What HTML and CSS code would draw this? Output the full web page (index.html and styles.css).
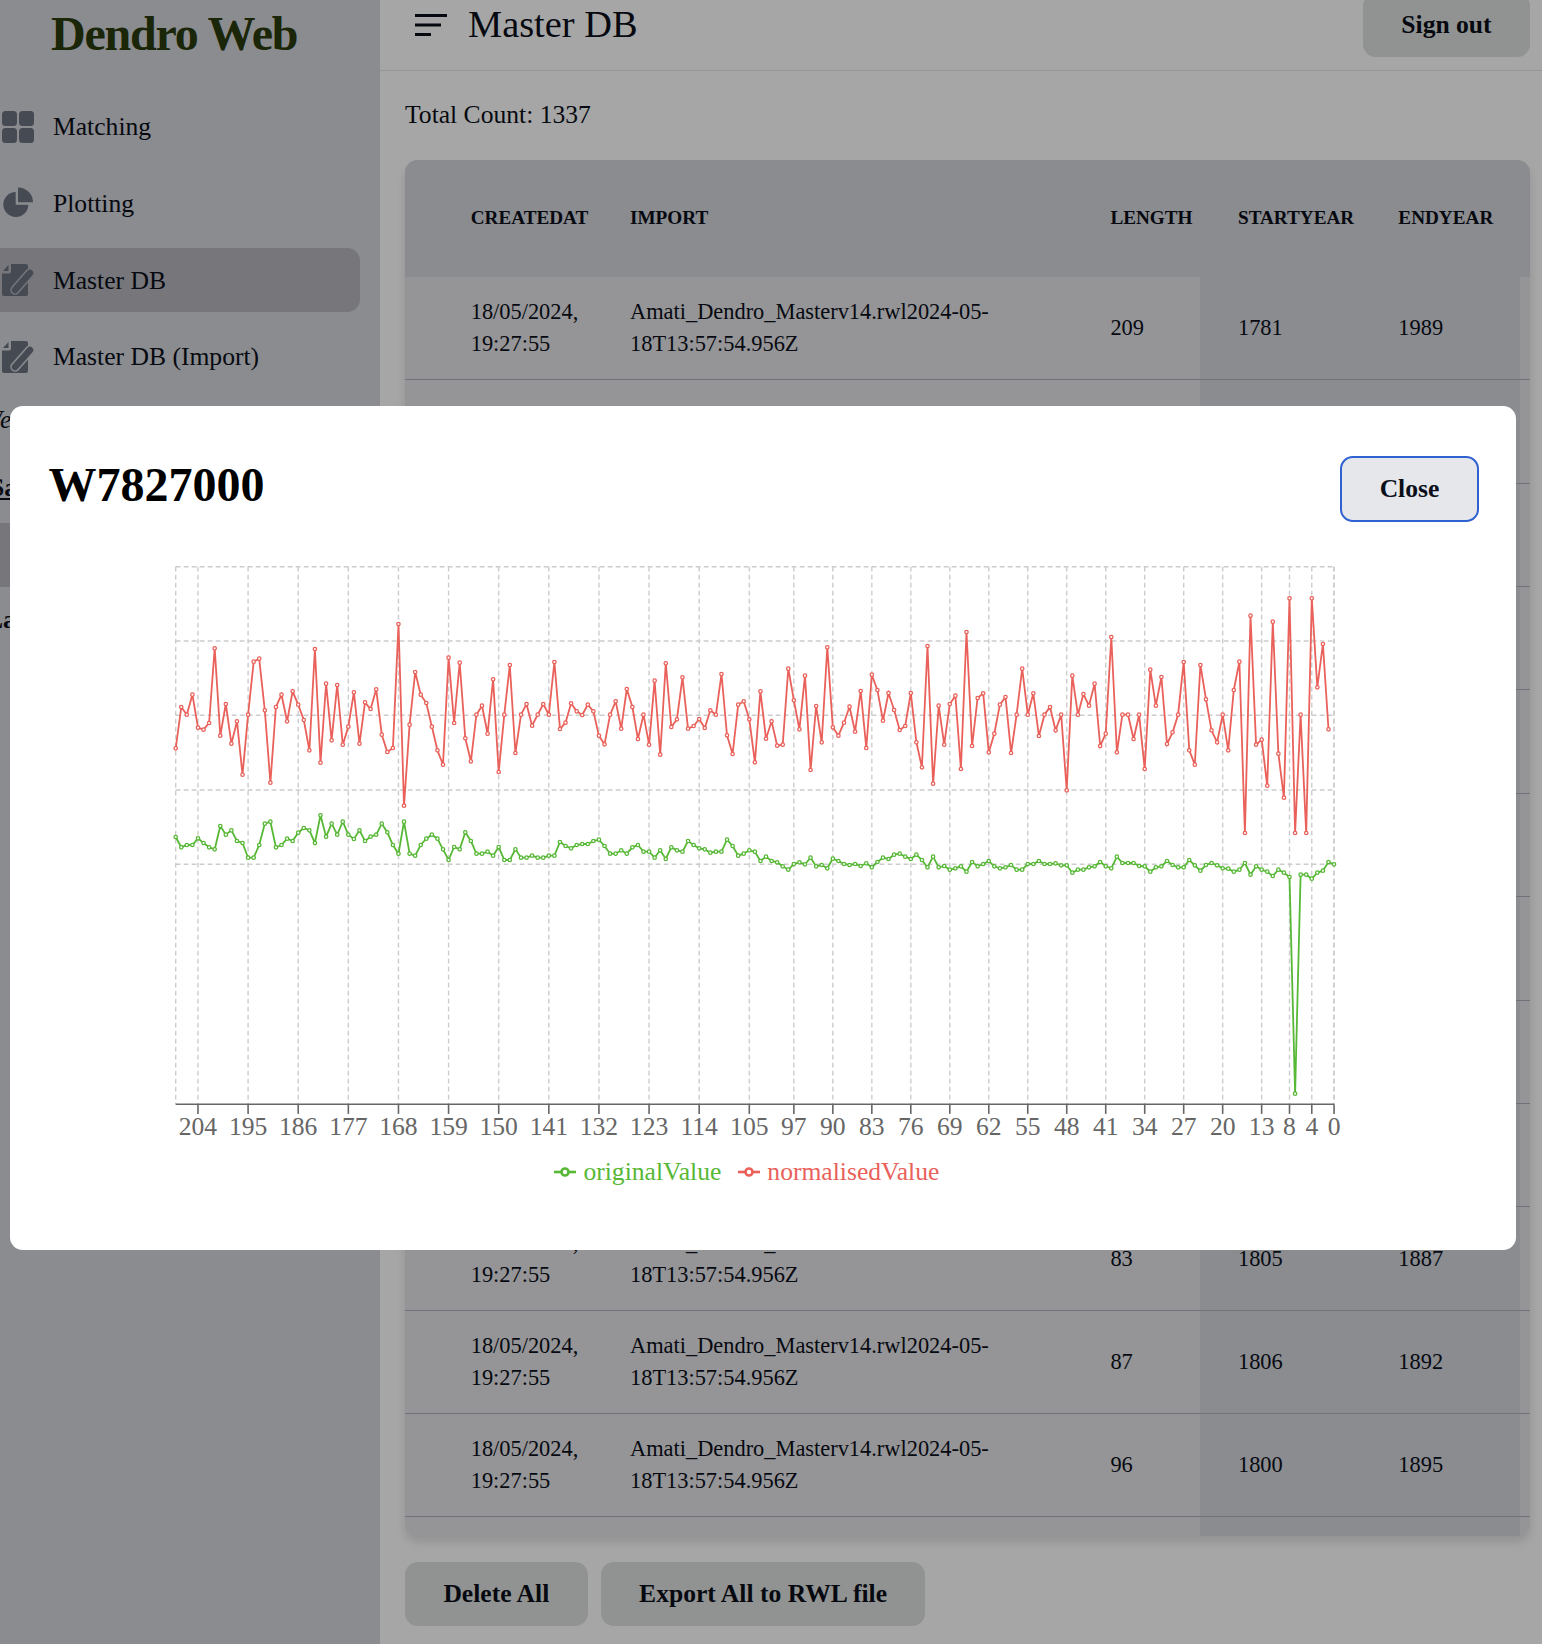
FILE: index.html
```html
<!DOCTYPE html>
<html lang="en">
<head>
    <meta charset="UTF-8">
    <title>Dendro Web</title>
    <link rel="stylesheet" href="styles.css">
</head>
<body>

    <div class="layout">
        <aside class="sidebar">
            <div class="logo">Dendro Web</div>

            <nav class="side-nav">
                <a class="nav-item">
                    <svg class="nav-icon" viewBox="0 0 32 32"><rect x="0" y="0" width="15" height="15" rx="3.5"/><rect x="17" y="0" width="15" height="15" rx="3.5"/><rect x="0" y="17" width="15" height="15" rx="3.5"/><rect x="17" y="17" width="15" height="15" rx="3.5"/></svg>
                    Matching
                </a>
                <a class="nav-item">
                    <svg class="nav-icon" viewBox="0 0 32 32"><path d="M16 0.5A15 15 0 0 1 31 15.3H16Z"/><path d="M13.7 5A12.5 12.5 0 1 0 26.3 17.7H13.7Z"/></svg>
                    Plotting
                </a>
                <a class="nav-item active">
                    <svg class="nav-icon" viewBox="0 0 32 32"><path d="M6.5 1L1 7H6.5Z"/><path d="M9 0H24A2 2 0 0 1 26 2V30A2 2 0 0 1 24 32H2A2 2 0 0 1 0 30V9.500H7A2 2 0 0 0 9 7.500Z"/><path class="pen-gap" d="M13 26L28 9"/><path class="pen-body" d="M13 26L28 9"/></svg>
                    Master DB
                </a>
                <a class="nav-item">
                    <svg class="nav-icon" viewBox="0 0 32 32"><path d="M6.5 1L1 7H6.5Z"/><path d="M9 0H24A2 2 0 0 1 26 2V30A2 2 0 0 1 24 32H2A2 2 0 0 1 0 30V9.500H7A2 2 0 0 0 9 7.500Z"/><path class="pen-gap" d="M13 26L28 9"/><path class="pen-body" d="M13 26L28 9"/></svg>
                    Master DB (Import)
                </a>
            </nav>

            <div class="side-note">Welcome</div>
            <div class="side-link">Sample</div>
            <div class="side-band"></div>
            <div class="side-last">Last</div>
        </aside>

        <main class="main">
            <header class="topbar">
                <svg class="menu-icon" viewBox="0 0 32 22"><path d="M0 1.500H32M0 11H26M0 20.500H16"/></svg>
                <h2 class="page-title">Master DB</h2>
                <button class="btn btn-signout">Sign out</button>
            </header>

            <div class="content">
                <p class="total-count">Total Count: 1337</p>

                <div class="table-box">
                    <table class="master-table">
                        <colgroup>
                            <col class="col-gap"><col class="col-created"><col class="col-import"><col class="col-length"><col class="col-start"><col class="col-end"><col class="col-tail">
                        </colgroup>
                        <thead>
                            <tr><th></th><th>createdAt</th><th>import</th><th>length</th><th>startYear</th><th>endYear</th><th></th></tr>
                        </thead>
                        <tbody>
                            <tr><td></td><td>18/05/2024, 19:27:55</td><td>Amati_Dendro_Masterv14.rwl2024-05-18T13:57:54.956Z</td><td>209</td><td class="shade">1781</td><td class="shade">1989</td><td></td></tr>
                            <tr><td></td><td>18/05/2024, 19:27:55</td><td>Amati_Dendro_Masterv14.rwl2024-05-18T13:57:54.956Z</td><td>152</td><td class="shade">1820</td><td class="shade">1971</td><td></td></tr>
                            <tr><td></td><td>18/05/2024, 19:27:55</td><td>Amati_Dendro_Masterv14.rwl2024-05-18T13:57:54.956Z</td><td>118</td><td class="shade">1790</td><td class="shade">1907</td><td></td></tr>
                            <tr><td></td><td>18/05/2024, 19:27:55</td><td>Amati_Dendro_Masterv14.rwl2024-05-18T13:57:54.956Z</td><td>101</td><td class="shade">1802</td><td class="shade">1902</td><td></td></tr>
                            <tr><td></td><td>18/05/2024, 19:27:55</td><td>Amati_Dendro_Masterv14.rwl2024-05-18T13:57:54.956Z</td><td>94</td><td class="shade">1811</td><td class="shade">1904</td><td></td></tr>
                            <tr><td></td><td>18/05/2024, 19:27:55</td><td>Amati_Dendro_Masterv14.rwl2024-05-18T13:57:54.956Z</td><td>90</td><td class="shade">1808</td><td class="shade">1897</td><td></td></tr>
                            <tr><td></td><td>18/05/2024, 19:27:55</td><td>Amati_Dendro_Masterv14.rwl2024-05-18T13:57:54.956Z</td><td>88</td><td class="shade">1803</td><td class="shade">1890</td><td></td></tr>
                            <tr><td></td><td>18/05/2024, 19:27:55</td><td>Amati_Dendro_Masterv14.rwl2024-05-18T13:57:54.956Z</td><td>85</td><td class="shade">1807</td><td class="shade">1891</td><td></td></tr>
                            <tr><td></td><td>18/05/2024, 19:27:55</td><td>Amati_Dendro_Masterv14.rwl2024-05-18T13:57:54.956Z</td><td>92</td><td class="shade">1801</td><td class="shade">1892</td><td></td></tr>
                            <tr><td></td><td>18/05/2024, 19:27:55</td><td>Amati_Dendro_Masterv14.rwl2024-05-18T13:57:54.956Z</td><td>83</td><td class="shade">1805</td><td class="shade">1887</td><td></td></tr>
                            <tr><td></td><td>18/05/2024, 19:27:55</td><td>Amati_Dendro_Masterv14.rwl2024-05-18T13:57:54.956Z</td><td>87</td><td class="shade">1806</td><td class="shade">1892</td><td></td></tr>
                            <tr><td></td><td>18/05/2024, 19:27:55</td><td>Amati_Dendro_Masterv14.rwl2024-05-18T13:57:54.956Z</td><td>96</td><td class="shade">1800</td><td class="shade">1895</td><td></td></tr>
                            <tr><td></td><td>18/05/2024, 19:27:55</td><td>Amati_Dendro_Masterv14.rwl2024-05-18T13:57:54.956Z</td><td>99</td><td class="shade">1799</td><td class="shade">1897</td><td></td></tr>
                        </tbody>
                    </table>
                </div>

                <div class="table-actions">
                    <button class="btn">Delete All</button>
                    <button class="btn">Export All to RWL file</button>
                </div>
            </div>
        </main>
    </div>

    <!-- chart popup -->
    <div class="overlay">
        <div class="modal">
            <div class="modal-head">
                <h1 class="modal-title">W7827000</h1>
                <button class="btn-close">Close</button>
            </div>

            <svg id="chart" class="chart" width="1429" height="585"></svg>

            <div class="legend">
                <span class="legend-item legend-original">
                    <svg width="22" height="14" viewBox="0 0 22 14"><path d="M0 7H22"/><circle cx="11" cy="7" r="3.500"/></svg>
                    originalValue
                </span>
                <span class="legend-item legend-normalised">
                    <svg width="22" height="14" viewBox="0 0 22 14"><path d="M0 7H22"/><circle cx="11" cy="7" r="3.500"/></svg>
                    normalisedValue
                </span>
            </div>
        </div>
    </div>

    <script src="chart.js"></script>
</body>
</html>
```
FILE: styles.css
```css
* {
    box-sizing: border-box;
}

body {
    margin: 0;
    height: 1644px;
    overflow: hidden;
    background-color: #fff;
    color: #0b0f1a;
    font-family: "Liberation Serif", "Times New Roman", serif;
    font-size: 25.6px;
    line-height: 41px;
}

/* page is scrolled down a few pixels in the shot */
.layout {
    display: flex;
    height: 1651px;
    margin-top: -7px;
}

.sidebar {
    --side-bg: #d5d7dd;
    width: 380px;
    flex-shrink: 0;
    overflow: hidden;
    background-color: var(--side-bg);
}

.logo {
    margin: 15px 0 0 51px;
    height: 52px;
    font-size: 48px;
    line-height: 52px;
    font-weight: bold;
    letter-spacing: -1.2px;
    color: #2a3a0b;
}

.side-nav {
    display: flex;
    flex-direction: column;
    gap: 12.8px;
    margin-top: 34.600px;
}

.nav-item {
    display: flex;
    align-items: center;
    gap: 19px;
    width: 360px;
    height: 64px;
    padding-left: 2px;
    border-radius: 0 12.8px 12.8px 0;
}

.nav-item.active {
    --side-bg: #b5b6bd;
    background-color: var(--side-bg);
}

.nav-icon {
    width: 32px;
    height: 32px;
    flex-shrink: 0;
    fill: #6b7280;
}

.pen-gap {
    fill: none;
    stroke: var(--side-bg);
    stroke-width: 9.500;
    stroke-linecap: round;
}

.pen-body {
    fill: none;
    stroke: #6b7280;
    stroke-width: 6.500;
    stroke-linecap: round;
}

.side-note {
    margin: 15.400px 0 0 -19px;
    font-style: italic;
    line-height: 32px;
    white-space: nowrap;
}

.side-link {
    margin: 36px 0 0 -10px;
    font-weight: bold;
    line-height: 32px;
    text-decoration: underline;
}

.side-band {
    width: 360px;
    height: 64px;
    margin-top: 19px;
    background-color: #b5b6bd;
}

.side-last {
    margin: 17px 0 0 -14px;
    font-weight: bold;
    line-height: 32px;
}

.main {
    flex: 1;
    min-width: 0;
}

.topbar {
    display: flex;
    align-items: center;
    height: 78px;
    padding: 0 12px 13.8px 35px;
    border-bottom: 1px solid #e5e7eb;
}

.menu-icon {
    width: 32px;
    height: 22px;
    fill: none;
    stroke: #0b0f1a;
    stroke-width: 3;
}

.page-title {
    flex: 1;
    margin: -1px 0 0 21px;
    font-size: 38.4px;
    line-height: 50px;
    font-weight: normal;
}

.btn {
    height: 64px;
    padding: 0 38.4px;
    border: none;
    border-radius: 12.8px;
    background-color: #dfe2e1;
    color: #0b0f1a;
    font-family: inherit;
    font-size: 25.6px;
    font-weight: bold;
}

.content {
    padding: 22.6px 12px 0 25px;
}

.total-count {
    margin: 0 0 25.400px;
}

.table-box {
    height: 1376px;
    overflow: hidden;
    border-radius: 12.8px;
    background-color: #e5e5e8;
    box-shadow: 0 6px 10px rgba(0, 0, 0, 0.12);
}

.master-table {
    width: 100%;
    table-layout: fixed;
    border-collapse: collapse;
    font-size: 22.4px;
    line-height: 32px;
}

.col-gap { width: 27.300px; }
.col-created { width: 159.300px; }
.col-import { width: 480.400px; }
.col-length { width: 127.600px; }
.col-start { width: 160.400px; }
.col-end { width: 160px; }
.col-tail { width: 10px; }

.master-table th {
    height: 117px;
    padding: 0 0 0 38.4px;
    background-color: #d5d7dd;
    font-size: 19.2px;
    font-weight: bold;
    text-align: left;
    text-transform: uppercase;
    white-space: nowrap;
}

.master-table tbody tr {
    border-bottom: 1px solid #aeaebf;
}

.master-table td {
    padding: 19.2px 38.4px;
}

.master-table td:first-child,
.master-table td:last-child,
.master-table th:first-child,
.master-table th:last-child {
    padding: 0;
}

.master-table td.shade {
    background-color: #d5d7dd;
}

.table-actions {
    display: flex;
    gap: 13px;
    margin-top: 25.6px;
}

.overlay {
    position: fixed;
    top: 0;
    left: 0;
    right: 0;
    bottom: 0;
    padding: 406px 26px 0 10px;
    background-color: rgba(0, 0, 0, 0.35);
}

.modal {
    height: 844px;
    padding: 50px 37px 0 38.4px;
    border-radius: 12.8px;
    background-color: #fff;
    color: #000;
}

.modal-head {
    display: flex;
    justify-content: space-between;
    align-items: center;
    height: 66px;
    margin-bottom: 38px;
}

.modal-title {
    margin: 0 0 8px;
    font-size: 48px;
    line-height: 58px;
    font-weight: bold;
}

.btn-close {
    width: 139px;
    height: 66px;
    border: 2.500px solid #2f62d0;
    border-radius: 12.8px;
    background-color: #e5e7eb;
    color: #0b0f1a;
    font-family: inherit;
    font-size: 25.6px;
    font-weight: bold;
}

.chart {
    display: block;
}

.chart .grid {
    stroke: #ccc;
    stroke-width: 1.400;
    stroke-dasharray: 4.800 3.200;
    fill: none;
}

.chart .axis {
    stroke: #666;
    stroke-width: 1.600;
    fill: none;
}

.chart .tick-label {
    fill: #666;
    font-size: 25.6px;
    text-anchor: middle;
}

.chart .series {
    fill: none;
    stroke-width: 1.800;
}

.chart .dot {
    fill: #fff;
    stroke-width: 1.300;
}

.chart .original { stroke: #57b836; }
.chart .normalised { stroke: #e9615a; }

.legend {
    display: flex;
    justify-content: center;
    gap: 17px;
    width: 1397px;
    margin-top: 11px;
    line-height: 32px;
}

.legend-item {
    display: flex;
    align-items: center;
    gap: 7px;
}

.legend-item svg {
    fill: #fff;
    stroke: currentColor;
    stroke-width: 2.600;
}

.legend-original { color: #57b836; }
.legend-normalised { color: #e9615a; }
```
FILE: chart.js
```js
// values are read as y position * 3 from the top of the chart, one per year, left to right
var normalised = [565,441,464,404,503,509,489,265,527,432,551,484,644,464,305,296,451,668,441,404,484,394,434,480,571,267,608,371,541,375,554,500,397,551,427,447,388,524,576,564,192,737,494,336,404,429,500,571,614,293,489,308,535,604,464,437,521,358,636,464,315,
    579,464,432,497,464,432,464,306,507,488,430,454,465,434,454,527,553,464,424,506,387,441,537,464,554,362,584,310,501,478,352,506,498,477,504,451,464,342,526,582,434,424,478,607,394,536,484,557,554,326,421,508,347,630,438,547,262,502,527,488,440,515,393,
    564,344,390,482,399,450,510,498,399,547,622,258,671,437,554,432,407,627,216,558,414,400,577,521,434,411,579,464,326,464,400,528,464,441,511,464,691,347,464,402,437,371,558,521,231,577,464,464,537,464,627,329,437,351,552,517,464,306,571,614,315,418,511,
    547,464,571,390,305,819,167,554,539,677,185,581,713,115,819,464,819,115,382,252,508];

var original = [831,862,855,855,835,849,862,868,798,824,811,843,849,893,893,855,791,785,862,855,836,843,818,804,811,849,766,830,791,824,785,824,837,811,843,830,824,791,817,855,881,785,881,887,855,836,824,836,868,900,861,868,817,843,881,881,875,887,861,900,900,
    868,893,893,887,893,893,887,887,846,858,865,855,852,852,843,839,858,881,881,871,881,862,855,875,875,893,871,897,862,871,875,843,855,865,868,878,875,875,839,858,887,881,871,875,903,890,903,907,919,929,912,907,913,893,919,915,925,896,903,912,915,912,918,
    910,922,906,893,897,884,881,890,897,884,900,922,890,922,918,929,925,919,935,906,919,912,903,919,925,922,915,929,929,912,912,903,912,912,910,916,916,938,929,929,922,919,906,919,925,890,909,909,909,918,919,935,922,919,903,915,922,922,900,916,932,915,909,
    916,925,926,935,929,909,944,919,929,935,948,929,938,951,1601,944,944,956,938,932,906,913];

var ticks = [204,195,186,177,168,159,150,141,132,123,114,105,97,90,83,76,69,62,55,48,41,34,27,20,13,8,4,0];

var chart = document.getElementById('chart');
var plotLeft = 127.7, plotRight = 1286, plotTop = 6.7, plotBottom = 544.3, step = 5.569;

function add(tag, attrs, text) {
    var el = document.createElementNS('http://www.w3.org/2000/svg', tag);
    for (var key in attrs) {
        el.setAttribute(key, attrs[key]);
    }
    if (text !== undefined) {
        el.textContent = text;
    }
    chart.appendChild(el);
}

function xFor(year) {
    return plotLeft + (208 - year) * step;
}

// grid
[6.7, 81, 155.3, 230, 304.3].forEach(function (y) {
    add('line', { 'class': 'grid', x1: plotLeft, x2: plotRight, y1: y, y2: y });
});
[plotLeft, plotRight].concat(ticks.map(xFor)).forEach(function (x) {
    add('line', { 'class': 'grid', x1: x, x2: x, y1: plotTop, y2: plotBottom });
});

// x axis
add('line', { 'class': 'axis', x1: plotLeft, x2: plotRight, y1: plotBottom, y2: plotBottom });
ticks.forEach(function (year) {
    var x = xFor(year);
    add('line', { 'class': 'axis', x1: x, x2: x, y1: plotBottom, y2: plotBottom + 9.6 });
    add('text', { 'class': 'tick-label', x: x, y: 575 }, year);
});

function drawSeries(values, name) {
    var points = values.map(function (v, i) {
        return (plotLeft + i * step).toFixed(1) + ',' + (v / 3).toFixed(1);
    });
    add('polyline', { 'class': 'series ' + name, points: points.join(' ') });
    values.forEach(function (v, i) {
        add('circle', { 'class': 'dot ' + name, cx: plotLeft + i * step, cy: v / 3, r: 1.7 });
    });
}

drawSeries(original, 'original');
drawSeries(normalised, 'normalised');
```
